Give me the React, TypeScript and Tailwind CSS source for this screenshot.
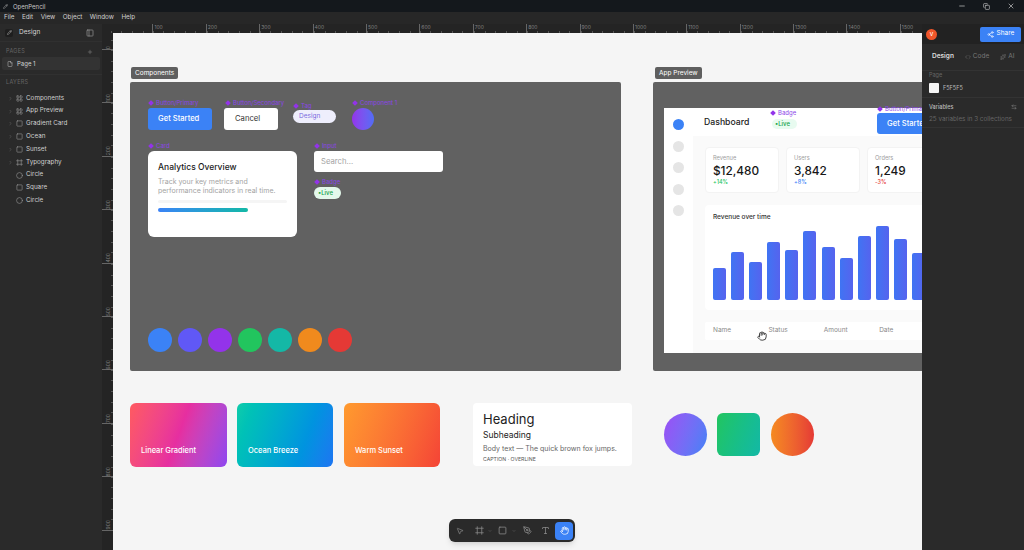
import { ChevronRight, Copy, File, Frame, Hand, LayoutGrid, Minus, MousePointer2, PanelLeft, PenTool, Pencil, Plus, Share2, Square, Circle, X, ArrowLeftRight, Type, Sparkles, Code, ChevronDown } from "lucide-react";

const layers = [
  { name: "Components", icon: "grid", arrow: true },
  { name: "App Preview", icon: "grid", arrow: true },
  { name: "Gradient Card", icon: "square", arrow: true },
  { name: "Ocean", icon: "square", arrow: true },
  { name: "Sunset", icon: "square", arrow: true },
  { name: "Typography", icon: "frame", arrow: true },
  { name: "Circle", icon: "circle", arrow: false },
  { name: "Square", icon: "square", arrow: false },
  { name: "Circle", icon: "circle", arrow: false },
];

const swatches = ["bg-[#3b82f6]", "bg-[#6058f6]", "bg-[#9333ea]", "bg-[#22c55e]", "bg-[#14b8a6]", "bg-[#f08a1d]", "bg-[#e53935]"];
const bars = [32, 48, 38, 58, 50, 69, 53, 42, 64, 74, 61, 47];
const topMarks = [0, 100, 200, 300, 400, 500, 600, 700, 800, 900, 1000, 1100, 1200, 1300, 1400, 1500];
const sideMarks = [0, 100, 200, 300, 400, 500, 600, 700, 800, 900];

function LayerIcon({ kind }: { kind: string }) {
  const cls = "text-[#9a9a9a] shrink-0";
  if (kind === "grid") return <LayoutGrid size={7} className={cls} />;
  if (kind === "frame") return <Frame size={7} className={cls} />;
  if (kind === "circle") return <Circle size={7} className={cls} />;
  return <Square size={7} className={cls} />;
}

function NodeLabel({ text, className }: { text: string; className: string }) {
  return (
    <div className={`absolute flex items-center gap-[3px] text-[6px] leading-[8px] text-[#8b45e8] ${className}`}>
      <span className="w-[4px] h-[4px] rotate-45 bg-[#9333ea]" />
      {text}
    </div>
  );
}

function Stat({ label, value, delta, color }: { label: string; value: string; delta: string; color: string }) {
  return (
    <div className="w-[74px] h-[46px] shrink-0 bg-white rounded-[4px] pl-[7px] pt-[6px] border border-[#f3f3f3]">
      <div className="text-[5.7px] leading-[8px] text-[#a0a0a0]">{label}</div>
      <div className="mt-[1.5px] text-[11.8px] leading-[15px] font-medium text-[#171717]">{value}</div>
      <div className={`text-[5.5px] leading-[7px] font-medium ${color}`}>{delta}</div>
    </div>
  );
}

export default function App() {
  return (
    <div className="w-[1024px] h-[550px] flex flex-col overflow-hidden bg-[#2a2a2a] font-['Inter',sans-serif] text-[#d4d4d4]">
      <div className="h-[12px] shrink-0 flex items-center bg-[#14181c] pl-[3px]">
        <Pencil size={5} className="text-[#c8c8c8]" />
        <span className="ml-[5px] text-[6px] text-[#c4c4c4]">OpenPencil</span>
        <div className="ml-auto flex items-center gap-[17px] pr-[9px] text-[#d0d0d0]">
          <Minus size={8} />
          <Copy size={7} />
          <X size={8} />
        </div>
      </div>
      <div className="h-[12px] shrink-0 flex items-center gap-[7.5px] bg-[#272727] pl-[4px] text-[6.3px] text-[#d0d0d0]">
        <span>File</span>
        <span>Edit</span>
        <span>View</span>
        <span>Object</span>
        <span>Window</span>
        <span>Help</span>
      </div>
      <div className="flex-1 flex min-h-0">
        <aside className="w-[102px] shrink-0 bg-[#2a2a2a] flex flex-col">
          <div className="h-[18px] flex items-center pl-[5px] pr-[8px] border-b border-[#303030]">
            <span className="w-[8px] h-[8px] rounded-[2px] bg-[#1e1e1e] flex items-center justify-center"><Pencil size={5} /></span>
            <span className="ml-[6px] text-[6.5px]">Design</span>
            <PanelLeft size={8} className="ml-auto text-[#9a9a9a]" />
          </div>
          <div className="flex items-center h-[15px] pt-[4px] pl-[6px] pr-[9px] text-[5.5px] tracking-[0.3px] text-[#666]">
            PAGES
            <Plus size={6} className="ml-auto text-[#888]" />
          </div>
          <div className="ml-[2px] mr-[2px] h-[13px] rounded-[2px] bg-[#333] flex items-center gap-[4px] pl-[5px] text-[6px]">
            <File size={6} className="text-[#c0c0c0]" />
            Page 1
          </div>
          <div className="mt-[4px] border-t border-[#303030] h-[16px] flex items-center pl-[6px] text-[5.5px] tracking-[0.3px] text-[#666]">LAYERS</div>
          <div className="flex flex-col mt-[2px]">
            {layers.map((layer, i) => (
              <div key={i} className="h-[12.8px] flex items-center text-[6.3px] text-[#cfcfcf]">
                <span className="w-[16px] flex justify-end pr-[3px] text-[#7a7a7a]">
                  {layer.arrow && <ChevronRight size={5} />}
                </span>
                <LayerIcon kind={layer.icon} />
                <span className="ml-[3px]">{layer.name}</span>
              </div>
            ))}
          </div>
        </aside>

        <div className="flex-1 min-w-0 flex flex-col">
          <div className="h-[9px] shrink-0 flex bg-[#242424] overflow-hidden">
            <div className="flex -ml-[3px]">
              {topMarks.map((m) => (
                <span key={m} className="w-[53.4px] h-[9px] shrink-0 border-l border-[#666] text-[5px] leading-[7px] pl-[1px] text-[#808080] bg-[repeating-linear-gradient(to_right,#555_0,#555_1px,transparent_1px,transparent_10.68px)] bg-[length:100%_2px] bg-bottom bg-no-repeat">
                  {m > 0 ? m : ""}
                </span>
              ))}
            </div>
          </div>
          <div className="flex-1 flex min-h-0">
            <div className="w-[11px] shrink-0 bg-[#242424] flex flex-col overflow-hidden">
              <div className="-mt-[36.4px] flex flex-col">
                {sideMarks.map((m) => (
                  <div key={m} className="h-[53.4px] shrink-0 border-b border-[#666] flex items-end pl-[3px] bg-[repeating-linear-gradient(to_bottom,#555_0,#555_1px,transparent_1px,transparent_10.68px)] bg-[length:2px_100%] bg-right bg-no-repeat">
                    <span className="[writing-mode:vertical-rl] rotate-180 text-[5px] leading-[6px] text-[#808080]">{m}</span>
                  </div>
                ))}
              </div>
            </div>
            <main className="relative flex-1 min-w-0 bg-[#f5f5f5] overflow-hidden">
              <div className="absolute left-[18px] top-[34px] h-[12px] px-[4px] rounded-[2px] bg-[#5f5f5f] text-white text-[6.5px] leading-[12px]">Components</div>
              <div className="absolute left-[17px] top-[49px] w-[491px] h-[289px] rounded-[2px] bg-[#616161]">
                <NodeLabel text="Button/Primary" className="left-[19px] top-[17px]" />
                <button className="absolute left-[18px] top-[26px] w-[64px] h-[22px] rounded-[3px] bg-[#3b82f6] text-white text-[7.6px] font-medium text-left pl-[10px]">Get Started</button>
                <NodeLabel text="Button/Secondary" className="left-[96px] top-[17px]" />
                <button className="absolute left-[94px] top-[26px] w-[54px] h-[22px] rounded-[3px] bg-white text-[#333] text-[7.7px] text-left pl-[11px]">Cancel</button>
                <NodeLabel text="Tag" className="left-[164px] top-[20px]" />
                <div className="absolute left-[163px] top-[28px] w-[43px] h-[13px] rounded-full bg-[#eeeefc] text-[#7c6be0] text-[6.5px] leading-[13px] pl-[6px]">Design</div>
                <NodeLabel text="Component 1" className="left-[223px] top-[17px]" />
                <div className="absolute left-[222px] top-[26px] w-[22px] h-[22px] rounded-full bg-gradient-to-r from-[#9333ea] to-[#4f6df5]" />
                <NodeLabel text="Card" className="left-[19px] top-[60px]" />
                <div className="absolute left-[18px] top-[69px] w-[149px] h-[86px] rounded-[6px] bg-white pl-[10px] pt-[10px]">
                  <div className="text-[8.5px] leading-[12px] font-medium text-[#1c1c1c]">Analytics Overview</div>
                  <div className="mt-[5px] text-[7px] leading-[8.7px] text-[#a3a3a3] whitespace-nowrap">Track your key metrics and<br />performance indicators in real time.</div>
                  <div className="mt-[5px] w-[129px] h-[3px] rounded-full bg-[#f5f5f5]" />
                  <div className="mt-[5px] w-[90px] h-[4px] rounded-full bg-gradient-to-r from-[#3b82f6] to-[#14b8a6]" />
                </div>
                <NodeLabel text="Input" className="left-[185px] top-[60px]" />
                <div className="absolute left-[184px] top-[69px] w-[129px] h-[21px] rounded-[3px] bg-white pl-[7px] text-[7.7px] leading-[21px] text-[#a3a3a3]">Search...</div>
                <NodeLabel text="Badge" className="left-[185px] top-[96px]" />
                <div className="absolute left-[184px] top-[105px] w-[27px] h-[12px] rounded-full bg-[#e4f9ec] text-[#16a34a] text-[6px] leading-[12px] pl-[4px] font-medium">•Live</div>
                <div className="absolute left-[18px] top-[246px] flex gap-[6.5px]">
                  {swatches.map((c) => (
                    <span key={c} className={`w-[23.5px] h-[23.5px] rounded-full ${c}`} />
                  ))}
                </div>
              </div>

              <div className="absolute left-[542px] top-[34px] h-[12px] px-[4px] rounded-[2px] bg-[#5f5f5f] text-white text-[6.5px] leading-[12px]">App Preview</div>
              <div className="absolute left-[540px] top-[49px] w-[300px] h-[289px] rounded-[2px] bg-[#616161]">
                <div className="absolute left-[11px] top-[26px] w-[289px] h-[245px] bg-[#fafafa] flex overflow-hidden">
                  <div className="w-[29px] shrink-0 bg-white flex flex-col items-center gap-[10.5px] pt-[11px]">
                    <span className="w-[11px] h-[11px] rounded-full bg-[#3b82f6]" />
                    <span className="w-[11px] h-[11px] rounded-full bg-[#e5e5e5]" />
                    <span className="w-[11px] h-[11px] rounded-full bg-[#e5e5e5]" />
                    <span className="w-[11px] h-[11px] rounded-full bg-[#e5e5e5]" />
                    <span className="w-[11px] h-[11px] rounded-full bg-[#e5e5e5]" />
                  </div>
                  <div className="flex-1 min-w-0">
                    <div className="h-[28px] bg-white flex items-center pl-[11px] pt-[2px]">
                      <span className="text-[8.7px] font-medium text-[#222]">Dashboard</span>
                    </div>
                    <div className="flex gap-[7px] pl-[12px] pt-[11px]">
                      <Stat label="Revenue" value="$12,480" delta="+14%" color="text-[#22c55e]" />
                      <Stat label="Users" value="3,842" delta="+8%" color="text-[#3b82f6]" />
                      <Stat label="Orders" value="1,249" delta="-3%" color="text-[#e53935]" />
                    </div>
                    <div className="ml-[12px] mt-[12px] w-[260px] h-[105px] bg-white rounded-[4px] pl-[8px] pt-[8px] overflow-hidden">
                      <div className="text-[6.5px] leading-[8px] font-medium text-[#333]">Revenue over time</div>
                      <div className="h-[79px] flex items-end gap-[5.1px]">
                        {bars.map((h, i) => (
                          <span key={i} style={{ height: `${h}px` }} className="w-[13px] shrink-0 rounded-[2px] bg-gradient-to-r from-[#3f74f3] to-[#5563ee]" />
                        ))}
                      </div>
                    </div>
                    <div className="ml-[12px] mt-[12px] w-[260px] h-[18px] bg-white rounded-[2px] flex items-center pl-[8px] text-[6.5px] text-[#8a8a8a]">
                      <span className="w-[55.4px]">Name</span>
                      <span className="w-[55.4px]">Status</span>
                      <span className="w-[55.4px]">Amount</span>
                      <span>Date</span>
                    </div>
                  </div>
                </div>
                <NodeLabel text="Badge" className="left-[118px] top-[27px]" />
                <div className="absolute left-[119px] top-[37px] w-[25px] h-[10px] rounded-full bg-[#e8fbf0] text-[#16a34a] text-[6px] leading-[10px] pl-[3px] font-medium">•Live</div>
                <NodeLabel text="Button/Primary" className="left-[225px] top-[23px]" />
                <button className="absolute left-[224px] top-[31px] w-[64px] h-[21px] rounded-[3px] bg-[#3b82f6] text-white text-[7.6px] font-medium text-left pl-[10px] whitespace-nowrap">Get Started</button>
                <Hand size={10} className="absolute left-[104px] top-[249px] text-[#222] fill-white" />
              </div>

              <div className="absolute left-[17px] top-[370px] w-[97px] h-[64px] rounded-[6px] bg-linear-110 from-[#ff5a5f] via-[#e62ea0] to-[#8f45f0] flex items-end pl-[11px] pb-[11px] text-[7.5px] font-medium text-white">Linear Gradient</div>
              <div className="absolute left-[124px] top-[370px] w-[96px] h-[64px] rounded-[6px] bg-linear-110 from-[#10ccaa] to-[#1d75f2] flex items-end pl-[11px] pb-[11px] text-[7.5px] font-medium text-white">Ocean Breeze</div>
              <div className="absolute left-[231px] top-[370px] w-[96px] h-[64px] rounded-[6px] bg-linear-110 from-[#ff9a2e] to-[#f44336] flex items-end pl-[11px] pb-[11px] text-[7.5px] font-medium text-white">Warm Sunset</div>

              <div className="absolute left-[360px] top-[370px] w-[159px] h-[63px] rounded-[4px] bg-white pl-[10px] pt-[8px] text-[#222]">
                <div className="text-[13px] leading-[16px]">Heading</div>
                <div className="mt-[2px] text-[8.5px] leading-[12px]">Subheading</div>
                <div className="mt-[2.5px] text-[7px] leading-[9px] text-[#666] whitespace-nowrap">Body text — The quick brown fox jumps.</div>
                <div className="mt-[3px] text-[5.2px] leading-[7px] text-[#555]">CAPTION · OVERLINE</div>
              </div>

              <div className="absolute left-[551px] top-[380px] w-[43px] h-[43px] rounded-full bg-linear-110 from-[#9b4df5] to-[#3b82f6]" />
              <div className="absolute left-[604px] top-[380px] w-[43px] h-[43px] rounded-[6px] bg-linear-110 from-[#22c55e] to-[#14b8a6]" />
              <div className="absolute left-[658px] top-[380px] w-[43px] h-[43px] rounded-full bg-gradient-to-r from-[#f58a1f] to-[#e53935]" />

              <div className="absolute left-[336px] top-[486px] h-[23px] w-[126px] rounded-[6px] bg-[#2a2a2a] flex items-center pl-[7px] text-[#8d8d8d] shadow-md">
                <MousePointer2 size={8} />
                <Frame size={9} className="ml-[10.5px]" />
                <ChevronDown size={4} className="ml-[4.5px]" />
                <Square size={9} className="ml-[5.5px]" />
                <ChevronDown size={4} className="ml-[5.5px]" />
                <PenTool size={9} className="ml-[6.5px]" />
                <Type size={9} className="ml-[9px]" />
                <span className="ml-[5.5px] w-[18px] h-[18px] rounded-[4px] bg-[#3b82f6] flex items-center justify-center">
                  <Hand size={9} className="text-white" />
                </span>
              </div>
            </main>
          </div>
        </div>

        <aside className="w-[102px] shrink-0 bg-[#2a2a2a] flex flex-col">
          <div className="h-[20px] flex items-center bg-[#222] pl-[4px] pr-[3px]">
            <span className="w-[11px] h-[11px] rounded-full bg-[#f0562a] text-white text-[5px] leading-[11px] text-center font-medium">V</span>
            <span className="ml-auto w-[41px] h-[15px] rounded-[2px] bg-[#3b82f6] text-white text-[6.5px] flex items-center justify-center gap-[3px]">
              <Share2 size={7} />
              Share
            </span>
          </div>
          <div className="h-[27px] flex items-center pl-[10px] gap-[11px] text-[6.5px] text-[#777] border-b border-[#333]">
            <span className="text-[#ddd] font-semibold">Design</span>
            <span className="flex items-center gap-[2px]"><Code size={6} />Code</span>
            <span className="flex items-center gap-[2px]"><Sparkles size={6} />AI</span>
          </div>
          <div className="h-[27px] pl-[7px] border-b border-[#333]">
            <div className="text-[5.5px] leading-[8px] text-[#666]">Page</div>
            <div className="mt-[4px] flex items-center gap-[4px]">
              <span className="w-[10px] h-[10px] rounded-[1px] bg-[#f5f5f5]" />
              <span className="text-[5.5px] text-[#bbb]">F5F5F5</span>
            </div>
          </div>
          <div className="h-[30px] pl-[7px] pr-[7px] pt-[5px] border-b border-[#333]">
            <div className="flex items-center justify-between text-[5.5px] leading-[8px] font-medium text-[#bbb]">
              Variables
              <ArrowLeftRight size={6} className="text-[#888]" />
            </div>
            <div className="mt-[4px] text-[6.3px] leading-[8px] text-[#666] whitespace-nowrap">25 variables in 3 collections</div>
          </div>
        </aside>
      </div>
    </div>
  );
}
